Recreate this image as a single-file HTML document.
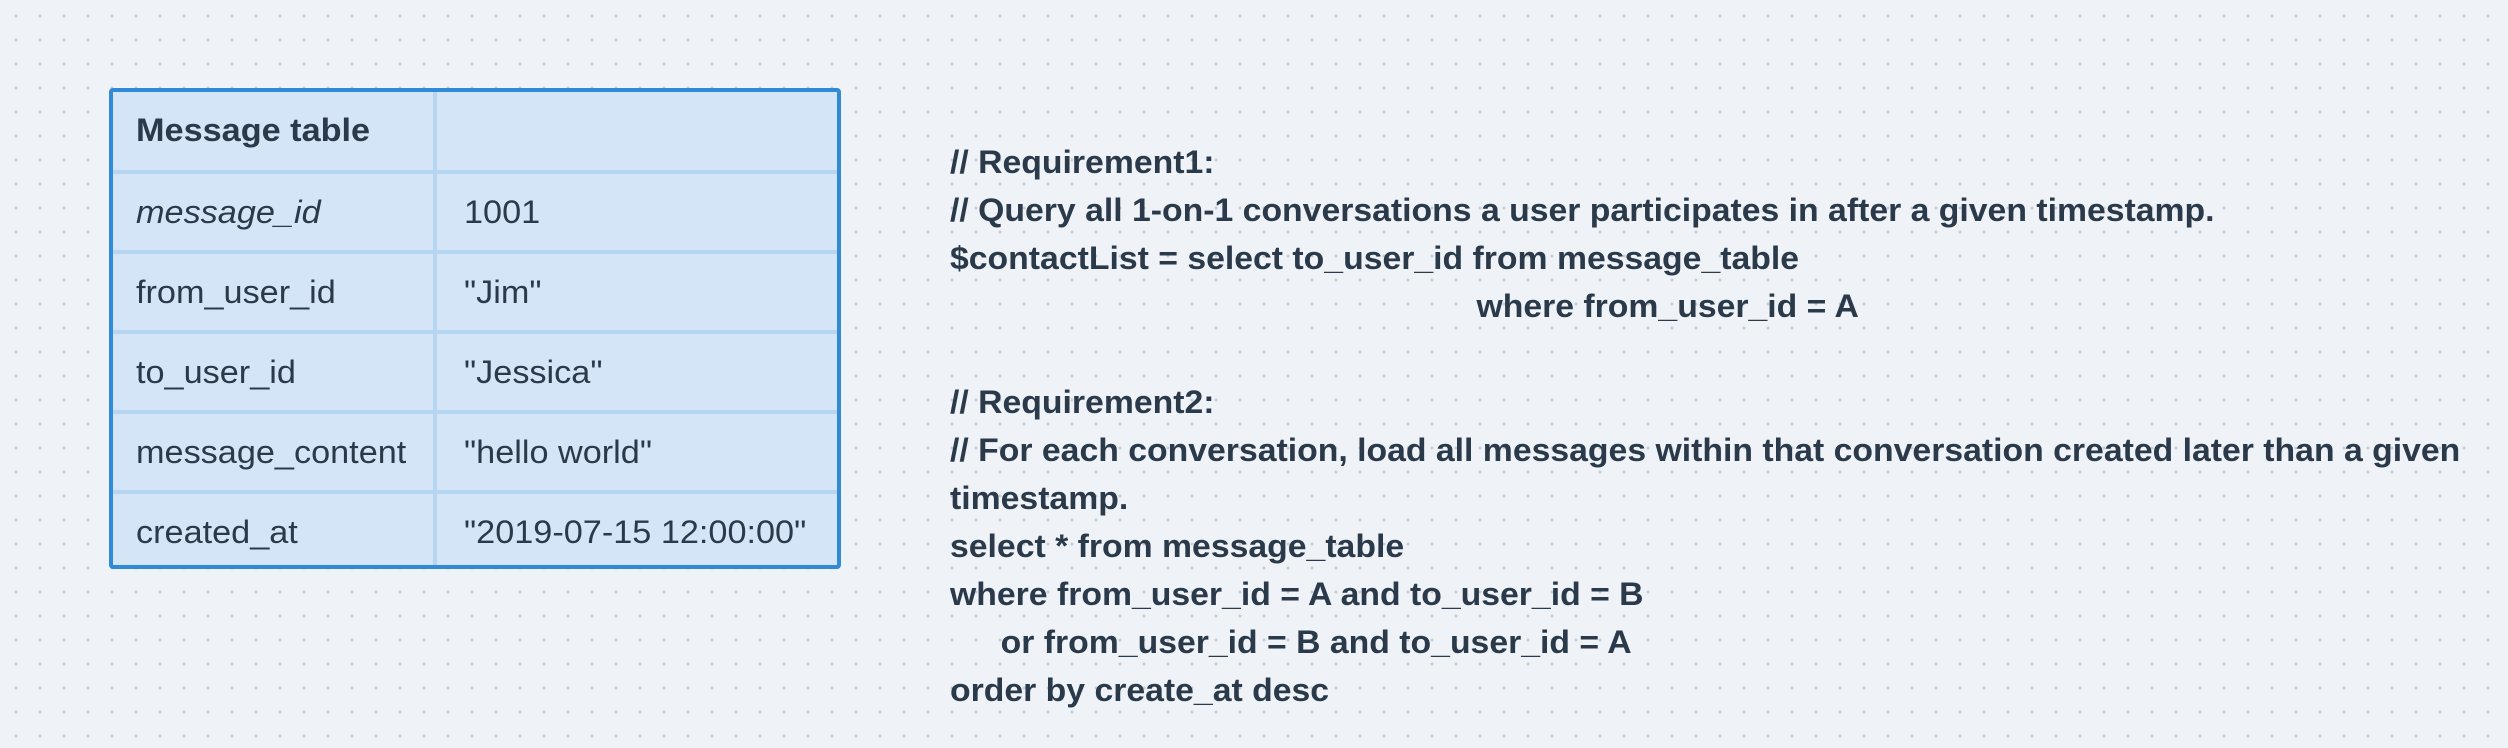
<!DOCTYPE html>
<html><head><meta charset="utf-8"><style>
html,body{margin:0;padding:0}
body{width:2508px;height:748px;overflow:hidden;background-color:#eff3f7;
background-image:radial-gradient(circle,#c5ccd4 1.3px,transparent 1.6px);
background-size:24px 24px;background-position:4px 4px;
font-family:"Liberation Sans",sans-serif;color:#2b3a4a;position:relative}
.tbl{position:absolute;left:109px;top:88px;width:724px;height:473px;border:4px solid #2f8ad8;border-radius:4px;background:#d3e5f6;overflow:hidden}
.row{position:absolute;left:0;width:724px;height:80px;border-top:4px solid #b5d5f1;box-sizing:border-box}
.row:first-child{border-top:none}
.vl{position:absolute;left:320px;top:0;bottom:0;width:4px;background:#b5d5f1}
.c{position:absolute;font-size:32px;line-height:76px;white-space:nowrap;transform:scaleX(1.07);transform-origin:left}
.k{left:23px}.v{left:351px}
.code{position:absolute;left:950px;top:138px;font-size:32px;font-weight:bold;line-height:48px;white-space:pre;transform:scaleX(1.055);transform-origin:left top}
</style></head><body>
<div class="tbl">
<div class="row" style="top:0"><div class="c k" style="font-weight:bold">Message table</div></div>
<div class="row" style="top:78px"><div class="c k" style="font-style:italic">message_id</div><div class="c v">1001</div></div>
<div class="row" style="top:158px"><div class="c k">from_user_id</div><div class="c v">"Jim"</div></div>
<div class="row" style="top:238px"><div class="c k">to_user_id</div><div class="c v">"Jessica"</div></div>
<div class="row" style="top:318px"><div class="c k">message_content</div><div class="c v">"hello world"</div></div>
<div class="row" style="top:398px"><div class="c k">created_at</div><div class="c v">"2019-07-15 12:00:00"</div></div>
<div class="vl"></div>
</div>
<div class="code">// Requirement1:
// Query all 1-on-1 conversations a user participates in after a given timestamp.
$contactList = select to_user_id from message_table
<span style="display:inline-block;width:499px"></span>where from_user_id = A

// Requirement2:
// For each conversation, load all messages within that conversation created later than a given
timestamp.
select * from message_table
where from_user_id = A and to_user_id = B
<span style="display:inline-block;width:48px"></span>or from_user_id = B and to_user_id = A
order by create_at desc</div>
</body></html>
